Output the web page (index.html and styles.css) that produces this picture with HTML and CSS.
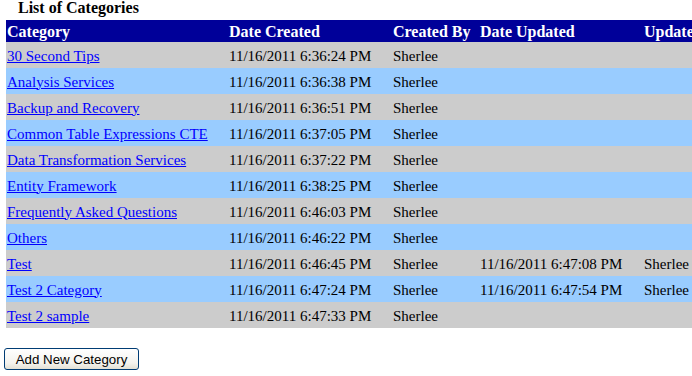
FILE: index.html
```html
<!DOCTYPE html>
<html lang="en">
<head>
  <meta charset="UTF-8" />
  <title>List of Categories</title>
  <link rel="stylesheet" href="styles.css">
</head>
<body>
  <!-- Categories grid -->
  <div class="grid-title">List of Categories</div>
  <table class="category-grid">
    <colgroup>
      <col class="col-name">
      <col class="col-date">
      <col class="col-user">
      <col class="col-date">
      <col class="col-updated-by">
    </colgroup>
    <tr class="grid-header">
      <th>Category</th>
      <th>Date Created</th>
      <th>Created By</th>
      <th>Date Updated</th>
      <th>Updated By</th>
    </tr>
    <tr class="row">
      <td><a href="#">30 Second Tips</a></td>
      <td>11/16/2011 6:36:24 PM</td>
      <td>Sherlee</td>
      <td></td>
      <td></td>
    </tr>
    <tr class="alt-row">
      <td><a href="#">Analysis Services</a></td>
      <td>11/16/2011 6:36:38 PM</td>
      <td>Sherlee</td>
      <td></td>
      <td></td>
    </tr>
    <tr class="row">
      <td><a href="#">Backup and Recovery</a></td>
      <td>11/16/2011 6:36:51 PM</td>
      <td>Sherlee</td>
      <td></td>
      <td></td>
    </tr>
    <tr class="alt-row">
      <td><a href="#">Common Table Expressions CTE</a></td>
      <td>11/16/2011 6:37:05 PM</td>
      <td>Sherlee</td>
      <td></td>
      <td></td>
    </tr>
    <tr class="row">
      <td><a href="#">Data Transformation Services</a></td>
      <td>11/16/2011 6:37:22 PM</td>
      <td>Sherlee</td>
      <td></td>
      <td></td>
    </tr>
    <tr class="alt-row">
      <td><a href="#">Entity Framework</a></td>
      <td>11/16/2011 6:38:25 PM</td>
      <td>Sherlee</td>
      <td></td>
      <td></td>
    </tr>
    <tr class="row">
      <td><a href="#">Frequently Asked Questions</a></td>
      <td>11/16/2011 6:46:03 PM</td>
      <td>Sherlee</td>
      <td></td>
      <td></td>
    </tr>
    <tr class="alt-row">
      <td><a href="#">Others</a></td>
      <td>11/16/2011 6:46:22 PM</td>
      <td>Sherlee</td>
      <td></td>
      <td></td>
    </tr>
    <tr class="row">
      <td><a href="#">Test</a></td>
      <td>11/16/2011 6:46:45 PM</td>
      <td>Sherlee</td>
      <td>11/16/2011 6:47:08 PM</td>
      <td>Sherlee</td>
    </tr>
    <tr class="alt-row">
      <td><a href="#">Test 2 Category</a></td>
      <td>11/16/2011 6:47:24 PM</td>
      <td>Sherlee</td>
      <td>11/16/2011 6:47:54 PM</td>
      <td>Sherlee</td>
    </tr>
    <tr class="row">
      <td><a href="#">Test 2 sample</a></td>
      <td>11/16/2011 6:47:33 PM</td>
      <td>Sherlee</td>
      <td></td>
      <td></td>
    </tr>
  </table>

  <div class="grid-actions">
    <button type="button" class="add-button">Add New Category</button>
  </div>
</body>
</html>
```

FILE: styles.css
```css
/* Page basics */
html, body {
  overflow: hidden;
}

body {
  margin: 0;
  background: #fff;
  color: #000;
  font-family: "Liberation Serif", "Times New Roman", serif;
}

/* Caption above the grid */
.grid-title {
  height: 20px;
  padding-left: 18px;
  font-size: 16px;
  font-weight: bold;
  line-height: 16px;
}

/* Categories grid */
.category-grid {
  margin-left: 6px;
  border-collapse: collapse;
  table-layout: fixed;
  width: 738px;
}

.col-name { width: 222px; }
.col-date { width: 164px; }
.col-user { width: 87px; }
.col-updated-by { width: 101px; }

.category-grid th,
.category-grid td {
  padding: 0 1px;
  text-align: left;
  white-space: nowrap;
  overflow: hidden;
  vertical-align: middle;
}

.grid-header {
  height: 22px;
  background: #000099;
  color: #fff;
}

.grid-header th {
  font-size: 16px;
  font-weight: bold;
  padding-top: 2px;
}

.row,
.alt-row {
  height: 26px;
  font-size: 15px;
}

.row td,
.alt-row td {
  padding-top: 2px;
}

.row { background: #cccccc; }
.alt-row { background: #99ccff; }

.category-grid a {
  color: #0000ff;
}

/* Button under the grid */
.grid-actions {
  padding: 20px 0 0 4px;
}

.add-button {
  width: 135px;
  height: 22px;
  padding: 0;
  font-family: "Liberation Sans", Arial, sans-serif;
  font-size: 13.3px;
  color: #000;
  background: linear-gradient(#ffffff, #f4f3ee 70%, #e3e0d3);
  border: 1px solid #003c74;
  border-radius: 3px;
}
```
